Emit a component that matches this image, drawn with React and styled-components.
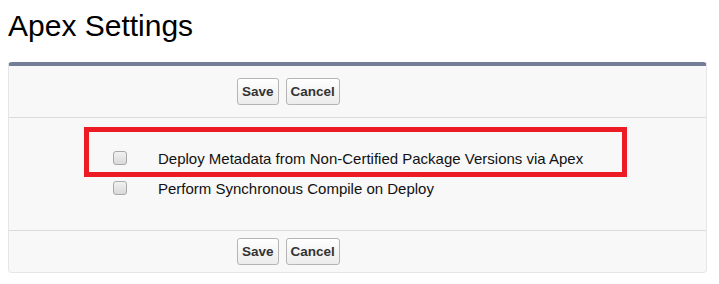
import React from "react";
import styled, { createGlobalStyle } from "styled-components";

const Global = createGlobalStyle`
  html, body { margin: 0; padding: 0; background: #ffffff; }
  body { font-family: "Liberation Sans", Arial, sans-serif; color: #000; }
`;

const Page = styled.div`
  position: relative;
  padding: 0 12px 0 8px;
`;

const Title = styled.h1`
  margin: 0;
  padding-top: 9px;
  height: 62px;
  box-sizing: border-box;
  font-size: 30px;
  font-weight: normal;
  line-height: 34px;
  color: #000;
`;

const Panel = styled.div`
  background: #f8f8f8;
  border: 1px solid #e6e6e6;
  border-top: 4px solid #737d96;
  border-radius: 4px;
  box-sizing: border-box;
`;

const ButtonRow = styled.div`
  display: flex;
  gap: 7px;
  align-items: center;
  padding-left: 228px;
  height: ${(p) => p.$h}px;
  border-top: ${(p) => (p.$divider ? "1px solid #dcdcdc" : "none")};
  border-bottom: ${(p) => (p.$dividerBottom ? "1px solid #dcdcdc" : "none")};
  box-sizing: border-box;
`;

const Button = styled.button`
  font-family: "Liberation Sans", Arial, sans-serif;
  font-weight: bold;
  font-size: 13.5px;
  color: #333;
  height: 27px;
  padding: 0 4px;
  border: 1px solid #b5b5b5;
  border-radius: 3px;
  background: linear-gradient(#ffffff, #ececec);
  cursor: pointer;
`;

const Options = styled.div`
  display: flex;
  flex-direction: column;
  padding: 25px 0 0 104px;
  height: 112px;
  box-sizing: border-box;
`;

const OptionRow = styled.label`
  display: flex;
  align-items: center;
  height: 30px;
  font-size: 15px;
  color: #111;
`;

const Box = styled.span`
  width: 14px;
  height: 14px;
  box-sizing: border-box;
  border: 1px solid #a9a9a9;
  border-radius: 3px;
  background: linear-gradient(#f2f2f2, #d9d9d9);
  margin-right: 31px;
  flex: none;
`;

const Highlight = styled.div`
  position: absolute;
  left: 84px;
  top: 127px;
  width: 543px;
  height: 50px;
  box-sizing: border-box;
  border: 5px solid #ed1c24;
  pointer-events: none;
`;

const options = [
  "Deploy Metadata from Non-Certified Package Versions via Apex",
  "Perform Synchronous Compile on Deploy",
];

export default function App() {
  return (
    <Page>
      <Global />
      <Title>Apex Settings</Title>
      <Panel>
        <ButtonRow $h={52} $dividerBottom>
          <Button>Save</Button>
          <Button>Cancel</Button>
        </ButtonRow>
        <Options>
          {options.map((o) => (
            <OptionRow key={o}>
              <Box />
              {o}
            </OptionRow>
          ))}
        </Options>
        <ButtonRow $h={42} $divider>
          <Button>Save</Button>
          <Button>Cancel</Button>
        </ButtonRow>
      </Panel>
      <Highlight />
    </Page>
  );
}
